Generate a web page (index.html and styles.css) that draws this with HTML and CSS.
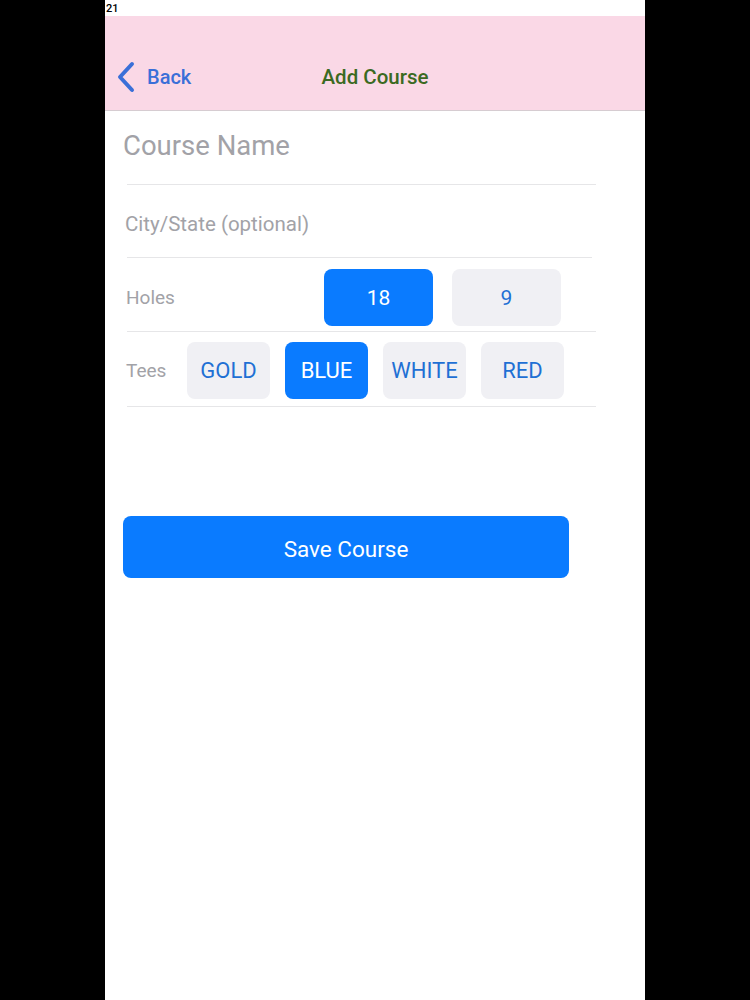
FILE: index.html
```html
<!DOCTYPE html>
<html>
<head>
<meta charset="utf-8">
<link rel="stylesheet" href="styles.css">
</head>
<body>
<div class="phone">
  <div class="status">21</div>
  <header class="nav">
    <div class="back">
      <svg class="chev" width="20" height="32" viewBox="0 0 20 32"><path d="M16 3 L4 16 L16 29" fill="none" stroke="#3a6fd8" stroke-width="4" stroke-linecap="round" stroke-linejoin="round"/></svg>
      <span class="back-text">Back</span>
    </div>
    <div class="title">Add Course</div>
    <div></div>
  </header>
  <main class="form">
    <div class="row row-name"><span class="ph name">Course Name</span></div>
    <div class="row row-city"><span class="ph city">City/State (optional)</span></div>
    <div class="row row-holes">
      <span class="label holes-label">Holes</span>
      <div class="seg holes-seg">
        <div class="btn wide on">18</div>
        <div class="btn wide">9</div>
      </div>
    </div>
    <div class="row row-tees">
      <span class="label tees-label">Tees</span>
      <div class="seg tees-seg">
        <div class="btn tee">GOLD</div>
        <div class="btn tee on">BLUE</div>
        <div class="btn tee">WHITE</div>
        <div class="btn tee">RED</div>
      </div>
    </div>
    <div class="save">Save Course</div>
  </main>
</div>
</body>
</html>
```
FILE: styles.css
```css
* { box-sizing: border-box; }
html, body { margin: 0; padding: 0; background: #000; }
body { font-family: Roboto, "Liberation Sans", sans-serif; }
.phone {
  margin-left: 105px;
  width: 540px;
  min-height: 1000px;
  background: #fff;
}
.status {
  height: 16px;
  font-size: 11px;
  line-height: 18px;
  padding-left: 1px;
  color: #000;
  font-weight: 500;
}
.nav {
  height: 95px;
  background: #fad8e6;
  border-bottom: 1px solid #d6ccd1;
  display: grid;
  grid-template-columns: 1fr auto 1fr;
  align-items: center;
  padding-top: 28px;
}
.back {
  display: flex;
  align-items: center;
  padding-left: 11px;
  gap: 11px;
}
.chev { display: block; }
.back-text {
  color: #3a6fd8;
  font-size: 20px;
  font-weight: 500;
}
.title {
  color: #3b6a22;
  font-size: 20.5px;
  font-weight: 500;
}
.form {
  padding-left: 22px;
}
.row {
  width: 469px;
  border-bottom: 1px solid #e6e6e8;
  display: flex;
  align-items: center;
}
.ph { color: #a2a2a7; }
.row-name { height: 74px; padding-bottom: 4px; }
.name { font-size: 27.5px; margin-left: -4px; }
.row-city { height: 73px; width: 465px; padding-top: 6px; }
.city { font-size: 20.5px; margin-left: -2px; }
.label { color: #a2a2a7; font-size: 19px; }
.row-holes { height: 74px; padding-top: 6px; }
.holes-label { width: 197px; margin-left: -1px; padding-left: 0; }
.seg { display: flex; }
.holes-seg { gap: 19px; margin-left: 1px; }
.btn {
  height: 57px;
  border-radius: 8px;
  background: #f0f0f4;
  color: #1f70d4;
  display: flex;
  align-items: center;
  justify-content: center;
  font-size: 21px;
}
.btn.on { background: #0a7bff; color: #fff; }
.wide { width: 109px; }
.row-tees { height: 75px; padding-top: 3px; }
.tees-label { width: 60px; margin-left: -1px; }
.tees-seg { gap: 15px; margin-left: 1px; }
.tee { width: 83px; font-size: 22px; }
.save {
  margin-top: 109px;
  margin-left: -4px;
  width: 446px;
  height: 62px;
  border-radius: 8px;
  background: #0a7bff;
  color: #fff;
  font-size: 22.5px;
  display: flex;
  align-items: center;
  justify-content: center;
  padding-top: 3px;
}
```
